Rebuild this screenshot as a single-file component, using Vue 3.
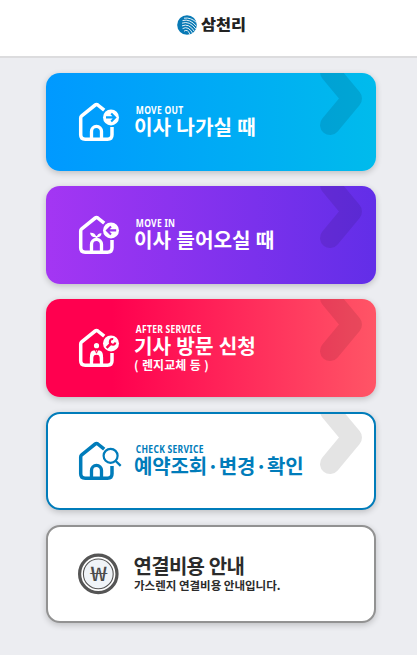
<script setup>
const cards = [
  { id: 'out', en: 'MOVE OUT', title: '이사 나가실 때' },
  { id: 'in', en: 'MOVE IN', title: '이사 들어오실 때' },
  { id: 'service', en: 'AFTER SERVICE', title: '기사 방문 신청', sub: '( 렌지교체 등 )' },
  { id: 'check', en: 'CHECK SERVICE', title: '예약조회·변경·확인' },
  { id: 'cost', title: '연결비용 안내', sub: '가스렌지 연결비용 안내입니다.' },
]
</script>

<template>
  <div class="page">
    <header class="header">
      <svg class="mark" viewBox="0 0 20 20">
        <defs>
          <clipPath id="globe"><circle cx="10" cy="10" r="9.8" /></clipPath>
        </defs>
        <circle cx="10" cy="10" r="9.8" fill="#0879b5" />
        <g clip-path="url(#globe)" fill="none" stroke="#fff" stroke-width="0.9">
          <path d="M7 3.2Q14 2 20 8" />
          <path d="M5.5 5.6Q13 3.4 19.5 11.4" />
          <path d="M5 8.2Q12.5 5.4 19 14.2" />
          <path d="M5 10.9Q12 7.8 17.6 16.6" />
          <path d="M5.6 13.6Q11.4 10.4 15.8 18.6" />
          <path d="M7 16.2Q10.6 13.4 13.4 20" />
        </g>
      </svg>
      <span class="brand">삼천리</span>
    </header>
    <main class="list">
      <section v-for="c in cards" :key="c.id" class="card" :class="c.id">
        <svg v-if="c.id !== 'cost'" class="icon" viewBox="0 0 44 42" fill="none" stroke="currentColor">
          <path stroke-width="3.5" stroke-linejoin="round" d="M26.2 9.2 19.8 4q-1.3-1-2.6 0L3.7 14.8q-1 .8-1 2.2v16.8q0 4.5 4.5 4.5h22.3q4.5 0 4.5-4.5V26" />
          <path stroke-width="3.3" d="M13.5 38v-7.6a5 5 0 0 1 10 0V38" />
          <g v-if="c.id === 'check'">
            <circle cx="32.6" cy="15.8" r="7" stroke-width="2.2" />
            <path stroke-width="2.4" d="m37.7 21 5 4.8" />
          </g>
          <circle v-else cx="33" cy="16.4" r="8" fill="currentColor" stroke="none" />
          <path v-if="c.id === 'out'" class="cut" d="M28 16.4h9m-3.8-4 4 4-4 4" />
          <g v-if="c.id === 'in'">
            <path class="cut" d="M38.2 16.4h-9m3.8-4-4 4 4 4" />
            <path stroke-width="1.8" d="M18.5 26v-4" />
            <path fill="currentColor" stroke="none" d="M18.5 23.2c-1-3.6-3.2-4.8-6.5-4.5.6 3.6 3.2 5 6.5 4.5Zm0 0c.8-3 2.3-4.1 5-4 -.2 3-2.2 4.4-5 4Z" />
          </g>
          <g v-if="c.id === 'service'">
            <path fill="currentColor" stroke="none" d="M12.2 34v-6q0-4 3.2-4.6h6.2q3.2.6 3.2 4.6v6h-3v-3a3.3 3.3 0 0 0-6.6 0v3Z" />
            <circle cx="18.5" cy="18.7" r="2.6" fill="currentColor" stroke="none" />
            <path class="cut thin" d="m17.2 22.8 1.3 3.4 1.3-3.4" />
            <path class="cut wrench" d="m28.6 20.8 4.2-4.2" />
            <path class="cut" d="M35.2 12.1a2.8 2.8 0 1 0 2.2 3.4" />
          </g>
        </svg>
        <svg v-else class="icon" viewBox="0 0 44 42">
          <circle cx="20.3" cy="20.9" r="18.7" fill="#fff" stroke="#555" stroke-width="3.2" />
          <circle cx="20.3" cy="20.9" r="14.9" fill="#f0f4f8" stroke="#555" stroke-width="1.1" />
          <text class="won" x="12.4" y="28.4" textLength="16.4" lengthAdjust="spacingAndGlyphs">₩</text>
        </svg>
        <div class="text">
          <span v-if="c.en" class="en">{{ c.en }}</span>
          <strong class="title">{{ c.title }}</strong>
          <span v-if="c.sub" class="sub">{{ c.sub }}</span>
        </div>
        <svg v-if="c.id !== 'cost'" class="chevron" viewBox="0 0 44 64">
          <path d="M11-1 33 25.5 11 52" />
        </svg>
      </section>
    </main>
  </div>
</template>

<style>
body {
  background: #ecedf1;
  overflow: hidden;
}
</style>

<style scoped>
.page {
  height: 655px;
  background: #ecedf1;
  font-family: "Noto Sans CJK KR", sans-serif;
}
.header {
  box-sizing: border-box;
  height: 58px;
  padding: 15px 0 0 177px;
  display: flex;
  gap: 4px;
  background: #fff;
  border-bottom: 2px solid #dcdcde;
}
.mark {
  width: 20px;
  height: 20px;
}
.brand {
  height: 18px;
  font-size: 16px;
  line-height: 18px;
  font-weight: 900;
  color: #222;
  transform: scale(1.02, 0.92);
  transform-origin: left center;
}
.list {
  display: flex;
  flex-direction: column;
  gap: 15px;
  padding: 15px 41px 0 46px;
}
.card {
  position: relative;
  overflow: hidden;
  height: 98px;
  border-radius: 14px;
  display: flex;
  align-items: center;
  color: #fff;
  box-shadow: 0 2px 6px rgba(0, 0, 0, 0.2);
}
.out {
  --tone: #02a0fd;
  background: linear-gradient(90deg, #0099ff, #00bbec);
}
.in {
  --tone: #9a34f0;
  background: linear-gradient(90deg, #a436f3, #622ee8);
}
.service {
  --tone: #ff0550;
  background: linear-gradient(90deg, #ff004f 20%, #ff5566);
}
.check,
.cost {
  background: #fff;
  border: 2px solid #007cba;
  box-sizing: border-box;
  color: #007cba;
}
.cost {
  border-color: #929292;
  color: #2b2b2b;
}
.icon {
  width: 44px;
  height: 42px;
  margin: 0 12px 0 32px;
  flex: none;
}
.check .icon,
.cost .icon {
  margin-left: 30px;
}
.cost .icon {
  margin-right: 11.5px;
}
.cut {
  stroke: var(--tone);
  stroke-width: 2.1;
}
.thin {
  stroke-width: 1;
}
.wrench {
  stroke-width: 2.6;
}
.won {
  font: 400 20px "Noto Sans CJK KR", sans-serif;
  fill: #4c4c4c;
}
.text {
  display: flex;
  flex-direction: column;
  align-items: flex-start;
  white-space: nowrap;
}
.en {
  font: 700 9.4px/10px "Noto Sans", sans-serif;
  letter-spacing: 0.3px;
  padding-left: 2px;
  transform: scale(0.91, 1.08);
  transform-origin: left;
}
.title {
  font-size: 20.2px;
  line-height: 22px;
  font-weight: 700;
  word-spacing: 0.6px;
}
.sub {
  font-size: 12px;
  line-height: 14px;
  font-weight: 700;
}
.service .sub {
  word-spacing: 0.8px;
  margin: 1px 0 -1px;
}
.check .title {
  font-size: 20px;
  letter-spacing: -0.15px;
}
.cost .title {
  font-size: 20px;
  letter-spacing: -0.7px;
  margin: -1px 0 1px;
}
.cost .sub {
  font-size: 11.5px;
  padding-left: 0.5px;
}
.chevron {
  position: absolute;
  left: 273px;
  top: 0;
  width: 44px;
  height: 64px;
}
.check .chevron {
  left: 271px;
  top: -2px;
}
.chevron path {
  fill: none;
  stroke: #000;
  stroke-opacity: 0.105;
  stroke-width: 20;
  stroke-linecap: round;
  stroke-linejoin: round;
}
.service .chevron path,
.in .chevron path {
  stroke-opacity: 0.09;
}
</style>
